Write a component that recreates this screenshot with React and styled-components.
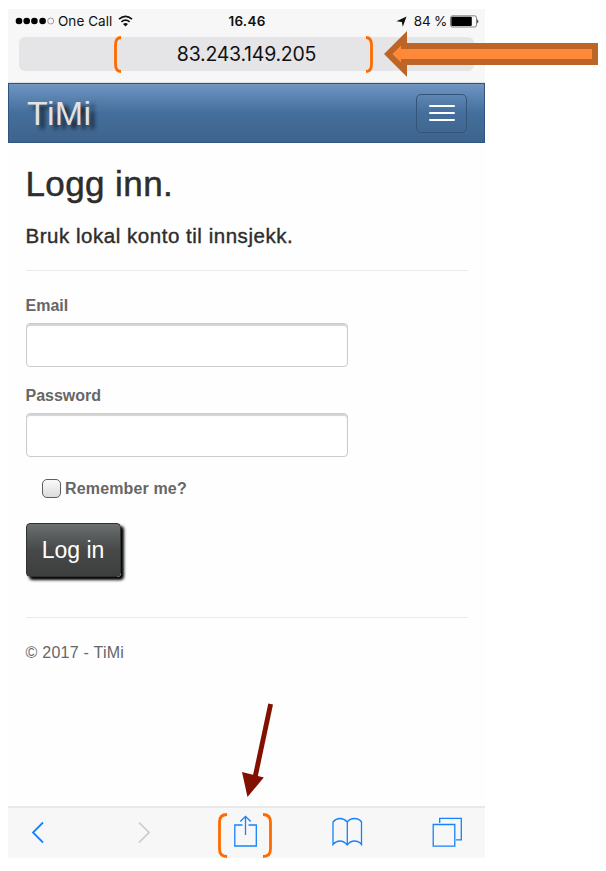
import React from "react";
import styled, { createGlobalStyle } from "styled-components";

const GlobalStyle = createGlobalStyle`
  *, *::before, *::after { box-sizing: border-box; }
  body { margin: 0; background: #fff; }
  h1, h2, p, form { margin: 0; }
`;

const Page = styled.main`
  position: relative;
  width: 606px;
  height: 871px;
  padding: 9px 0 0 8px;
  overflow: hidden;
  font-family: "Liberation Sans", Arial, sans-serif;
`;

const Phone = styled.div`
  display: flex;
  flex-direction: column;
  width: 477px;
  height: 849px;
  background: #fefefe;
`;

const BrowserTop = styled.header`
  height: 74px;
  background: #f7f7f7;
  border-bottom: 1px solid #e0e0e0;
  font-family: Inter, sans-serif;
  color: #111;
`;

const StatusBar = styled.div`
  display: grid;
  grid-template-columns: 1fr auto 1fr;
  align-items: center;
  height: 24px;
  padding: 0 6px 0 7px;
  font-size: 13.5px;
  line-height: 24px;
`;

const StatusGroup = styled.div`
  display: flex;
  align-items: center;
  justify-content: ${(p) => (p.$end ? "flex-end" : "flex-start")};
`;

const StatusText = styled.span`
  margin-left: ${(p) => p.$gap || 0}px;
  font-weight: ${(p) => (p.$strong ? 600 : 400)};
  letter-spacing: ${(p) => p.$spacing || 0}px;
  white-space: nowrap;
`;

const StatusIcon = styled.svg`
  display: block;
  flex: none;
  margin-left: ${(p) => p.$gap || 0}px;
`;

const AddressBar = styled.div`
  height: 34px;
  margin: 4px 11px 0;
  border-radius: 6px;
  background: #e5e5e7;
  font-size: 19.5px;
  line-height: 34px;
  text-align: center;
  letter-spacing: -0.25px;
`;

const NavBar = styled.nav`
  display: flex;
  align-items: center;
  justify-content: space-between;
  height: 60px;
  padding: 0 17px 0 18px;
  border: 1px solid #2f5680;
  background: linear-gradient(#6f95c3 0%, #446e9b 50%, #3e648d 100%);
`;

const Brand = styled.span`
  color: #e2e2e2;
  font-size: 34px;
  line-height: 58px;
  letter-spacing: 0.4px;
  text-shadow: 5px 4px 4px rgba(0, 0, 0, 0.75);
`;

const MenuButton = styled.button`
  display: flex;
  flex-direction: column;
  align-items: center;
  justify-content: center;
  gap: 4.5px;
  width: 51px;
  height: 39px;
  padding: 0;
  border: 1px solid #345578;
  border-radius: 5px;
  background: transparent;
`;

const MenuLine = styled.span`
  width: 26px;
  height: 2.5px;
  border-radius: 1px;
  background: #fff;
`;

const Content = styled.section`
  flex: 1;
  padding: 21px 17px 0 17.5px;
  color: #666;
`;

const Title = styled.h1`
  height: 40px;
  color: #2d2d2d;
  font-size: 35px;
  font-weight: 400;
  line-height: 40px;
  letter-spacing: 0.4px;
  -webkit-text-stroke: 0.5px #2d2d2d;
`;

const Subtitle = styled.h2`
  height: 24px;
  margin-top: 20px;
  color: #2d2d2d;
  font-size: 20.5px;
  font-weight: 400;
  line-height: 24px;
  letter-spacing: 0.53px;
  -webkit-text-stroke: 0.4px #2d2d2d;
`;

const Divider = styled.hr`
  height: 1px;
  margin: ${(p) => p.$top}px 0 0;
  border: 0;
  background: #eaeaea;
`;

const Field = styled.label`
  display: block;
  margin-top: ${(p) => p.$top}px;
  font-size: 16px;
  font-weight: 700;
  line-height: 20px;
`;

const Input = styled.input`
  display: block;
  width: 322.5px;
  height: 44px;
  margin-top: 7px;
  padding: 8px 12px;
  border: 1px solid #ccc;
  border-radius: 4px;
  background: #fff;
  outline: none;
  box-shadow: inset 0 2px 1px #d3d3d3;
`;

const Remember = styled.label`
  display: flex;
  align-items: center;
  height: 20px;
  margin: 22px 0 0 16.5px;
  font-size: 16px;
  font-weight: 700;
  letter-spacing: 0.15px;
`;

const Checkbox = styled.input`
  appearance: none;
  width: 19px;
  height: 19px;
  margin: 0 4px 2px 0;
  border: 1px solid #5e5e5e;
  border-radius: 5px;
  background: linear-gradient(#fafafa, #dcdcdc);
`;

const LoginButton = styled.button`
  display: block;
  width: 95px;
  height: 54px;
  margin-top: 24px;
  padding: 0;
  border: 1px solid #303232;
  border-radius: 4px;
  background: linear-gradient(#6b6f6f 0%, #474949 50%, #3d3f3f 100%);
  box-shadow: 3px 3px 3px #000;
  color: #fff;
  font: 23px "Liberation Sans", Arial, sans-serif;
  letter-spacing: 0;
`;

const Copyright = styled.p`
  margin-top: 25px;
  font-size: 16px;
  line-height: 20px;
  letter-spacing: 0.25px;
`;

const Toolbar = styled.footer`
  display: flex;
  height: 52px;
  border-top: 2px solid #e9e9e9;
  background: #f7f7f7;
`;

const ToolIcon = styled.svg`
  display: block;
  flex: none;
  width: ${(p) => p.$width}px;
  height: 50px;
  fill: none;
  stroke: ${(p) => (p.$disabled ? "#c9c9c9" : "#1682fb")};
  stroke-width: ${(p) => p.$weight || 1.3};
`;

const Annotation = styled.svg`
  position: absolute;
  left: ${(p) => p.$x}px;
  top: ${(p) => p.$y}px;
`;

function Bracket({ x, y, width, height, closing }) {
  const d = closing
    ? `M0 1.5 Q${width - 1.5} 1.5 ${width - 1.5} 9 V${height - 9} Q${width - 1.5} ${height - 1.5} 0 ${height - 1.5}`
    : `M${width} 1.5 Q1.5 1.5 1.5 9 V${height - 9} Q1.5 ${height - 1.5} ${width} ${height - 1.5}`;
  return (
    <Annotation $x={x} $y={y} width={width} height={height}>
      <path d={d} fill="none" stroke="#ff6a00" strokeWidth="2.8" />
    </Annotation>
  );
}

function SignalDots() {
  return (
    <StatusIcon width="40" height="10" viewBox="0 0 40 10">
      {[4, 11.7, 19.4, 27.6].map((x) => <circle key={x} cx={x} cy="5" r="3.3" fill="#000" />)}
      <circle cx="35.7" cy="5" r="3" fill="none" stroke="#777" strokeWidth=".7" />
    </StatusIcon>
  );
}

function WifiIcon() {
  return (
    <StatusIcon $gap={6} width="15" height="12" viewBox="0 0 15 12">
      <path d="M1 4.2Q7.5-1.3 14 4.2M3.4 6.9q4.1-3.4 8.2 0" fill="none" stroke="#111" strokeWidth="1.7" />
      <path d="M5 8.9q2.5-1.8 5 0L7.5 11.4Z" fill="#111" />
    </StatusIcon>
  );
}

function BatteryIcon() {
  return (
    <StatusIcon $gap={3} width="29" height="13" viewBox="0 0 29 13">
      <rect x=".5" y=".8" width="26" height="11.2" rx="2" fill="none" stroke="#555" strokeWidth=".7" />
      <rect x="1.3" y="1.7" width="20.5" height="9.4" rx="1" fill="#000" />
      <path d="M27.3 4.2q2 2.2 0 4.4Z" fill="#111" />
    </StatusIcon>
  );
}

export default function App() {
  return (
    <>
      <GlobalStyle />
      <Page>
        <Phone>
          <BrowserTop>
            <StatusBar>
              <StatusGroup>
                <SignalDots />
                <StatusText $gap={3} $spacing={0.05}>One Call</StatusText>
                <WifiIcon />
              </StatusGroup>
              <StatusText $strong $spacing={0.25}>16.46</StatusText>
              <StatusGroup $end>
                <StatusIcon width="11" height="11" viewBox="0 0 11 11">
                  <path d="M10.5.5 6.8 10.8 5.8 6 .4 5.2Z" fill="#111" />
                </StatusIcon>
                <StatusText $gap={7} $spacing={-0.25}>84 %</StatusText>
                <BatteryIcon />
              </StatusGroup>
            </StatusBar>
            <AddressBar>83.243.149.205</AddressBar>
          </BrowserTop>
          <NavBar>
            <Brand>TiMi</Brand>
            <MenuButton aria-label="Menu">
              <MenuLine /><MenuLine /><MenuLine />
            </MenuButton>
          </NavBar>
          <Content>
            <Title>Logg inn.</Title>
            <Subtitle>Bruk lokal konto til innsjekk.</Subtitle>
            <Divider $top={22} />
            <form>
              <Field $top={25}>Email<Input type="email" /></Field>
              <Field $top={19}>Password<Input type="password" /></Field>
              <Remember><Checkbox type="checkbox" />Remember me?</Remember>
              <LoginButton type="button">Log in</LoginButton>
            </form>
            <Divider $top={40} />
            <Copyright>© 2017 - TiMi</Copyright>
          </Content>
          <Toolbar>
            <ToolIcon $width={90} $weight={1.8} viewBox="0 0 90 50">
              <path d="M35 14.5 25 24.5 35 34.5" />
            </ToolIcon>
            <ToolIcon $width={110} $disabled $weight={1.6} viewBox="90 0 110 50">
              <path d="m131 14.5 10 10-10 10" />
            </ToolIcon>
            <ToolIcon $width={90} viewBox="200 0 90 50">
              <path d="M234.5 17H226.8V38H248.3V17H240.5M237.5 27V8.5M232.3 13.5l5.2-5.2 5.2 5.2" />
            </ToolIcon>
            <ToolIcon $width={100} viewBox="290 0 100 50">
              <path d="M339.3 14Q336 10.5 332 10.5T325 14V36.5Q328 33 332 33T339.3 37Q342 33 346.5 33T353.5 36.5V14Q351 10.5 346.5 10.5T339.3 14V37" />
            </ToolIcon>
            <ToolIcon $width={87} viewBox="390 0 87 50">
              <path d="M425.2 16.5H446.8V38.2H425.2ZM431.7 15V10.3H453.3V31.8H448" />
            </ToolIcon>
          </Toolbar>
        </Phone>
        <Bracket x={114} y={36} width={7} height={37} />
        <Bracket x={366} y={36} width={7} height={37} closing />
        <Annotation $x={383} $y={30} width="216" height="48">
          <path d="M1 24 24 1V13H215V35H24V47Z" fill="#bd6427" />
          <path d="M9.5 24 18 15.5V19H209V29H18V32.5Z" fill="#ff8938" />
        </Annotation>
        <Annotation $x={240} $y={702} width="36" height="96">
          <path d="M28.3 1.5 33 2.5 15.6 84.5 10.8 83.5Z" fill="#821000" />
          <path d="M2 70 23.8 75.5 7.5 95Z" fill="#821000" />
        </Annotation>
        <Bracket x={218} y={813} width={9} height={45} />
        <Bracket x={263} y={813} width={9} height={45} closing />
      </Page>
    </>
  );
}
